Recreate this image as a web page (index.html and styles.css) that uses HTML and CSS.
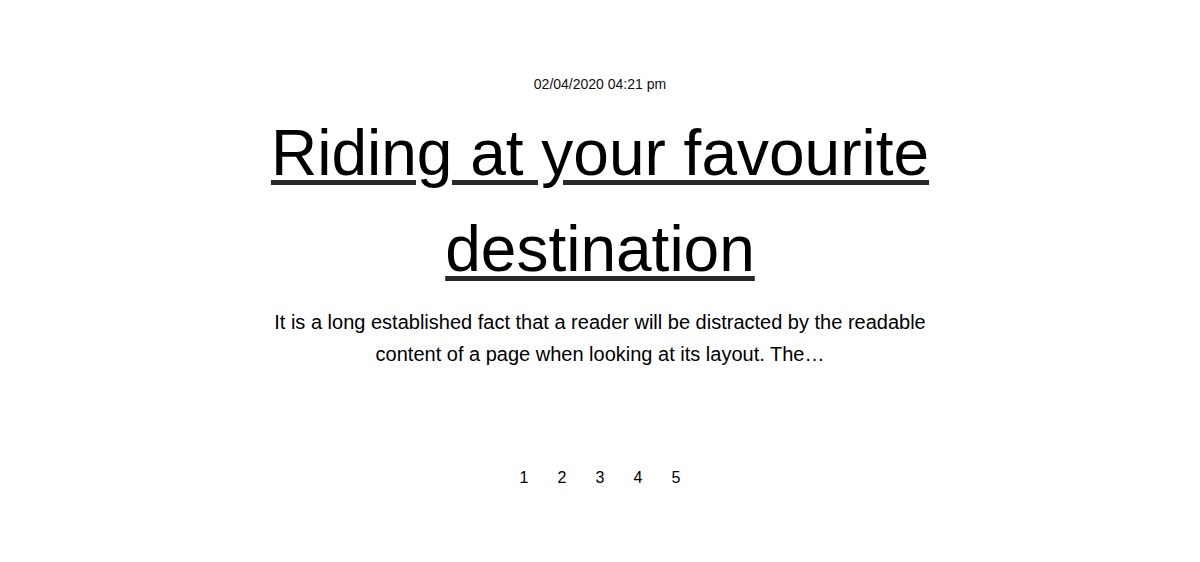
FILE: index.html
```html
<!DOCTYPE html>
<html lang="en">
<head>
<meta charset="utf-8">
<title>Blog</title>
<link rel="stylesheet" href="styles.css">
</head>
<body>
<main class="page">
  <article class="post">
    <div class="post-date">02/04/2020 04:21 pm</div>
    <h2 class="post-title"><a href="#">Riding at your favourite destination</a></h2>
    <p class="post-excerpt">It is a long established fact that a reader will be distracted by the readable content of a page when looking at its layout. The…</p>
  </article>
  <nav class="pagination">
    <a href="#" class="page-link">1</a>
    <a href="#" class="page-link">2</a>
    <a href="#" class="page-link">3</a>
    <a href="#" class="page-link">4</a>
    <a href="#" class="page-link">5</a>
  </nav>
</main>
</body>
</html>
```

FILE: styles.css
```css
html, body {
  margin: 0;
  padding: 0;
  background: #ffffff;
}
body {
  font-family: "Liberation Sans", Arial, sans-serif;
  color: #000;
}
.page {
  width: 680px;
  margin: 0 auto;
  padding-top: 74px;
  text-align: center;
}
.post-date {
  font-size: 14px;
  line-height: 21px;
  color: #111;
}
.post-title {
  margin: 10px 0 9px;
  font-size: 64px;
  line-height: 96px;
  font-weight: 400;
}
.post-title a {
  color: #000;
  text-decoration: underline;
  text-decoration-color: #25282c;
  text-decoration-thickness: 5px;
  text-underline-offset: 5px;
}
.post-excerpt {
  margin: 0;
  font-size: 20px;
  line-height: 32px;
}
.pagination {
  display: flex;
  justify-content: center;
  margin-top: 96px;
}
.page-link {
  display: block;
  width: 38px;
  font-size: 16px;
  line-height: 24px;
  color: #000;
  text-decoration: none;
}
```
